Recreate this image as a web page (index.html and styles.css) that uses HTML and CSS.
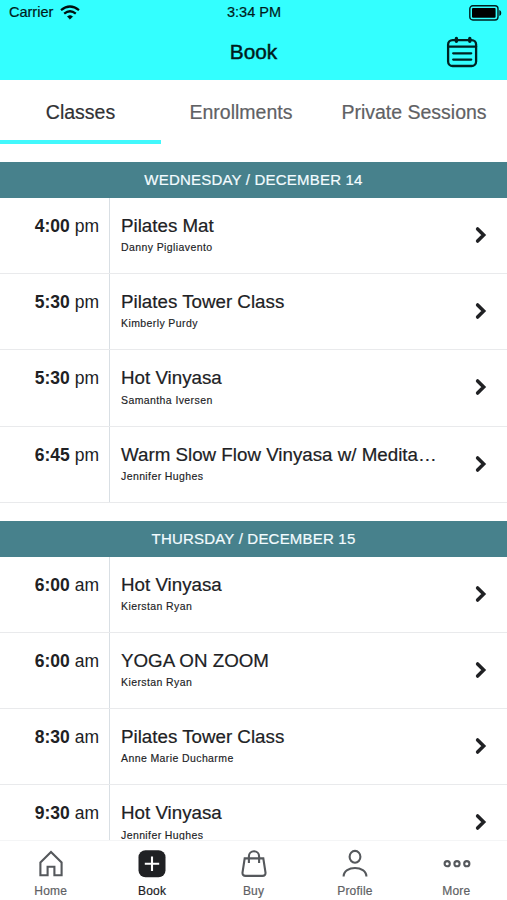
FILE: index.html
```html
<!DOCTYPE html>
<html lang="en">
<head>
<meta charset="utf-8">
<title>Book</title>
<link rel="stylesheet" href="styles.css">
</head>
<body>
<div class="app">
  <header class="top">
    <div class="status">
      <div class="carrier"><span>Carrier</span>
        <svg width="20" height="15" viewBox="0 0 20 15" fill="none" stroke="#00100f" stroke-width="2.2"><path d="M1 5.2Q10-2.2 19 5.2"/><path d="M4.2 8.7Q10 3.8 15.8 8.7"/><path d="M10 14.2 7.4 11.6Q10 9.2 12.6 11.6Z" fill="#00100f" stroke="#00100f" stroke-width=".6"/></svg>
      </div>
      <span class="clock">3:34 PM</span>
      <svg class="battery" width="33" height="16" viewBox="0 0 33 16"><rect x=".8" y=".8" width="28.2" height="14.2" rx="3" fill="none" stroke="#001f1f" stroke-width="1.4"/><rect x="3" y="3" width="23.6" height="9.8" rx="1" fill="#000"/><path d="M30.3 5v6q2-.6 2-3t-2-3z" fill="#001f1f"/></svg>
    </div>
    <div class="bar">
      <h1>Book</h1>
      <svg class="calendar" width="32" height="32" viewBox="0 0 32 32" fill="none" stroke="#002222" stroke-width="2.3" stroke-linecap="round"><rect x="2.1" y="4.1" width="28" height="25.9" rx="4.5"/><path d="M2.1 10.6h28M7.2 17.3h18M7.2 23.6h18"/><path d="M10.4 2.4v2.8M23.8 2.4v2.8" stroke-width="3.4"/></svg>
    </div>
  </header>
  <nav class="tabs">
    <span class="tab active">Classes</span><span class="tab">Enrollments</span><span class="tab">Private Sessions</span>
  </nav>
  <main class="schedule">
    <section>
      <h2>WEDNESDAY / DECEMBER 14</h2>
      <div class="row"><div class="time"><b>4:00</b> pm</div><div class="info"><div class="name">Pilates Mat</div><div class="teacher">Danny Pigliavento</div></div><svg class="chevron" viewBox="0 0 12 18"><path d="M2.6 2.9 8.7 9 2.6 15.1"/></svg></div>
      <div class="row"><div class="time"><b>5:30</b> pm</div><div class="info"><div class="name">Pilates Tower Class</div><div class="teacher">Kimberly Purdy</div></div><svg class="chevron" viewBox="0 0 12 18"><path d="M2.6 2.9 8.7 9 2.6 15.1"/></svg></div>
      <div class="row"><div class="time"><b>5:30</b> pm</div><div class="info"><div class="name">Hot Vinyasa</div><div class="teacher">Samantha Iversen</div></div><svg class="chevron" viewBox="0 0 12 18"><path d="M2.6 2.9 8.7 9 2.6 15.1"/></svg></div>
      <div class="row"><div class="time"><b>6:45</b> pm</div><div class="info"><div class="name">Warm Slow Flow Vinyasa w/ Medita…</div><div class="teacher">Jennifer Hughes</div></div><svg class="chevron" viewBox="0 0 12 18"><path d="M2.6 2.9 8.7 9 2.6 15.1"/></svg></div>
    </section>
    <section>
      <h2>THURSDAY / DECEMBER 15</h2>
      <div class="row"><div class="time"><b>6:00</b> am</div><div class="info"><div class="name">Hot Vinyasa</div><div class="teacher">Kierstan Ryan</div></div><svg class="chevron" viewBox="0 0 12 18"><path d="M2.6 2.9 8.7 9 2.6 15.1"/></svg></div>
      <div class="row"><div class="time"><b>6:00</b> am</div><div class="info"><div class="name">YOGA ON ZOOM</div><div class="teacher">Kierstan Ryan</div></div><svg class="chevron" viewBox="0 0 12 18"><path d="M2.6 2.9 8.7 9 2.6 15.1"/></svg></div>
      <div class="row"><div class="time"><b>8:30</b> am</div><div class="info"><div class="name">Pilates Tower Class</div><div class="teacher">Anne Marie Ducharme</div></div><svg class="chevron" viewBox="0 0 12 18"><path d="M2.6 2.9 8.7 9 2.6 15.1"/></svg></div>
      <div class="row"><div class="time"><b>9:30</b> am</div><div class="info"><div class="name">Hot Vinyasa</div><div class="teacher">Jennifer Hughes</div></div><svg class="chevron" viewBox="0 0 12 18"><path d="M2.6 2.9 8.7 9 2.6 15.1"/></svg></div>
    </section>
  </main>
  <footer class="dock">
    <div class="item"><svg viewBox="0 0 30 30"><path d="M4.4 13.4 15 2.9l10.6 10.5v12.9h-7.2v-8.5h-6.8v8.5H4.4z"/></svg><span>Home</span></div>
    <div class="item current"><svg viewBox="0 0 30 30"><rect x="1.5" y="1.2" width="27" height="27" rx="7" fill="#202124" stroke="none"/><path d="M15 7.6v14.4M7.8 14.8h14.4" stroke="#fff"/></svg><span>Book</span></div>
    <div class="item"><svg viewBox="0 0 30 30"><path d="M5.7 9.4h18.6l2.2 14.2q.2 3.3-3 3.3H6.5q-3.2 0-3-3.3zM9.9 14V7.4a5.1 5.1 0 0 1 10.2 0V14"/></svg><span>Buy</span></div>
    <div class="item"><svg viewBox="0 0 30 30"><ellipse cx="15" cy="7.8" rx="5.4" ry="5.9"/><path d="M3.6 27.6c0-11.4 22.8-11.4 22.8 0"/></svg><span>Profile</span></div>
    <div class="item"><svg viewBox="0 0 30 30"><circle cx="5.2" cy="14.7" r="2.6"/><circle cx="15" cy="14.7" r="2.6"/><circle cx="24.8" cy="14.7" r="2.6"/></svg><span>More</span></div>
  </footer>
</div>
</body>
</html>
```
FILE: styles.css
```css
* { box-sizing: border-box; }
body {
  margin: 0;
  background: #fff;
  color: #202124;
  font-family: "Liberation Sans", Arial, sans-serif;
}
.app { height: 900px; display: flex; flex-direction: column; overflow: hidden; }
svg { display: block; flex: none; }

.top { height: 80px; flex: none; background: #33ffff; color: #001b1b; }
.status {
  height: 24px;
  display: grid;
  grid-template-columns: 1fr auto 1fr;
  align-items: center;
  padding: 0 5px 0 9px;
  font-size: 14.5px;
  -webkit-text-stroke: .2px #001b1b;
}
.carrier { display: flex; align-items: center; gap: 7px; }
.clock { padding-right: 4px; margin-left: 1px; }
.battery { justify-self: end; margin-top: 1px; }
.bar {
  height: 55px;
  display: grid;
  grid-template-columns: 1fr auto 1fr;
  align-items: center;
}
h1 {
  grid-column: 2;
  margin: 0;
  font-size: 20.8px;
  line-height: 24px;
  font-weight: 400;
  -webkit-text-stroke: .45px #001b1b;
}
.calendar { justify-self: end; margin: 1px 29px 0 0; }

.tabs { height: 64px; flex: none; display: grid; grid-template-columns: 161px 160px 1fr; }
.tab {
  border-bottom: 4px solid transparent;
  font-size: 19.5px;
  line-height: 64px;
  height: 64px;
  text-align: center;
  white-space: nowrap;
  color: #606164;
  -webkit-text-stroke: .2px #606164;
}
.tab.active { color: #303134; border-color: #42f8fc; -webkit-text-stroke-color: #303134; }

.schedule { height: 696px; flex: none; padding-top: 18px; overflow: hidden; }
section { margin-bottom: 18px; }
h2 {
  height: 36px;
  margin: 0;
  background: #47818c;
  color: #f3fcff;
  font-size: 15px;
  font-weight: 400;
  line-height: 36px;
  letter-spacing: .2px;
  text-align: center;
  -webkit-text-stroke: .2px #f3fcff;
}
.row { height: 76.2px; display: flex; border-bottom: 1px solid #e9eaec; }
.time {
  width: 110px;
  padding: 18px 10px 0 0;
  border-right: 1px solid #d9dfe4;
  font-size: 17.5px;
  line-height: 20px;
  text-align: right;
}
.info { flex: 1; padding: 17px 0 0 11px; white-space: nowrap; }
.name { font-size: 18.75px; line-height: 22px; -webkit-text-stroke: .2px #202124; }
.teacher {
  margin-top: 3.3px;
  font-size: 10.5px;
  line-height: 14px;
  letter-spacing: .4px;
  -webkit-text-stroke: .15px #202124;
}
.chevron {
  width: 12px;
  height: 18px;
  margin: 28px 20.5px 0 0;
  fill: none;
  stroke: #202124;
  stroke-width: 3.5;
  stroke-linecap: round;
}

.dock {
  height: 60px;
  flex: none;
  display: flex;
  border-top: 1px solid #f4f5f6;
  background: #fff;
  color: #606164;
}
.item {
  flex: 1;
  display: flex;
  flex-direction: column;
  align-items: center;
  padding-top: 8px;
  font-size: 12px;
  line-height: 14px;
  letter-spacing: .2px;
  -webkit-text-stroke: .2px currentColor;
}
.item svg {
  width: 30px;
  height: 30px;
  margin: 0 0 5px .6px;
  fill: none;
  stroke: #55585c;
  stroke-width: 2.1;
}
.current { color: #202124; }
```
